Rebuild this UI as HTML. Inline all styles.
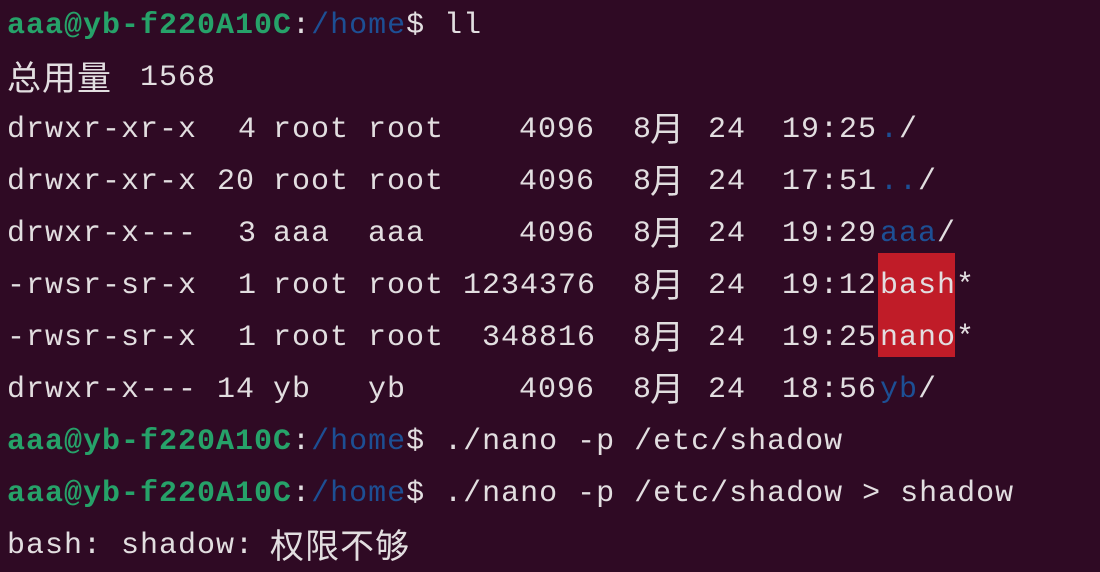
<!DOCTYPE html>
<html><head><meta charset="utf-8"><style>
html,body{margin:0;padding:0;}
body{width:1100px;height:570px;background:#2f0a24;overflow:hidden;position:relative;font-family:"Liberation Mono","Noto Sans CJK SC",monospace;font-size:30px;color:#e2dee0;letter-spacing:1px;}
.t{position:absolute;white-space:pre;line-height:52px;height:52px;}
.g{color:#26a269;font-weight:bold;}
.b{color:#1d4f94;}
.c{font-family:"Noto Sans CJK SC",sans-serif;font-size:34px;letter-spacing:1px;}
.red{position:absolute;left:878px;top:253px;width:77px;height:104px;background:#c01c28;}
</style></head><body>
<div class="red"></div>
<div class="t" style="left:7px;top:0"><span class="g">aaa@yb-f220A10C</span>:<span class="b">/home</span>$ ll</div>
<div class="t c" style="left:7px;top:50px">总用量</div>
<div class="t" style="left:140px;top:52px">1568</div>

<div class="t" style="left:7px;top:104px">drwxr-xr-x</div>
<div class="t" style="left:238px;top:104px">4</div>
<div class="t" style="left:273px;top:104px">root</div>
<div class="t" style="left:368px;top:104px">root</div>
<div class="t" style="left:519px;top:104px">4096</div>
<div class="t" style="left:633px;top:104px">8</div><div class="t c" style="left:650px;top:101px">月</div>
<div class="t" style="left:708px;top:104px">24</div>
<div class="t" style="left:782px;top:104px">19:25</div>
<div class="t" style="left:880px;top:104px"><span class="b">.</span>/</div>

<div class="t" style="left:7px;top:156px">drwxr-xr-x</div>
<div class="t" style="left:217px;top:156px">20</div>
<div class="t" style="left:273px;top:156px">root</div>
<div class="t" style="left:368px;top:156px">root</div>
<div class="t" style="left:519px;top:156px">4096</div>
<div class="t" style="left:633px;top:156px">8</div><div class="t c" style="left:650px;top:153px">月</div>
<div class="t" style="left:708px;top:156px">24</div>
<div class="t" style="left:782px;top:156px">17:51</div>
<div class="t" style="left:880px;top:156px"><span class="b">..</span>/</div>

<div class="t" style="left:7px;top:208px">drwxr-x---</div>
<div class="t" style="left:238px;top:208px">3</div>
<div class="t" style="left:273px;top:208px">aaa</div>
<div class="t" style="left:368px;top:208px">aaa</div>
<div class="t" style="left:519px;top:208px">4096</div>
<div class="t" style="left:633px;top:208px">8</div><div class="t c" style="left:650px;top:205px">月</div>
<div class="t" style="left:708px;top:208px">24</div>
<div class="t" style="left:782px;top:208px">19:29</div>
<div class="t" style="left:880px;top:208px"><span class="b">aaa</span>/</div>

<div class="t" style="left:7px;top:260px">-rwsr-sr-x</div>
<div class="t" style="left:238px;top:260px">1</div>
<div class="t" style="left:273px;top:260px">root</div>
<div class="t" style="left:368px;top:260px">root</div>
<div class="t" style="left:463px;top:260px">1234376</div>
<div class="t" style="left:633px;top:260px">8</div><div class="t c" style="left:650px;top:257px">月</div>
<div class="t" style="left:708px;top:260px">24</div>
<div class="t" style="left:782px;top:260px">19:12</div>
<div class="t" style="left:880px;top:260px">bash*</div>

<div class="t" style="left:7px;top:312px">-rwsr-sr-x</div>
<div class="t" style="left:238px;top:312px">1</div>
<div class="t" style="left:273px;top:312px">root</div>
<div class="t" style="left:368px;top:312px">root</div>
<div class="t" style="left:482px;top:312px">348816</div>
<div class="t" style="left:633px;top:312px">8</div><div class="t c" style="left:650px;top:309px">月</div>
<div class="t" style="left:708px;top:312px">24</div>
<div class="t" style="left:782px;top:312px">19:25</div>
<div class="t" style="left:880px;top:312px">nano*</div>

<div class="t" style="left:7px;top:364px">drwxr-x---</div>
<div class="t" style="left:217px;top:364px">14</div>
<div class="t" style="left:273px;top:364px">yb</div>
<div class="t" style="left:368px;top:364px">yb</div>
<div class="t" style="left:519px;top:364px">4096</div>
<div class="t" style="left:633px;top:364px">8</div><div class="t c" style="left:650px;top:361px">月</div>
<div class="t" style="left:708px;top:364px">24</div>
<div class="t" style="left:782px;top:364px">18:56</div>
<div class="t" style="left:880px;top:364px"><span class="b">yb</span>/</div>

<div class="t" style="left:7px;top:416px"><span class="g">aaa@yb-f220A10C</span>:<span class="b">/home</span>$ ./nano -p /etc/shadow</div>
<div class="t" style="left:7px;top:468px"><span class="g">aaa@yb-f220A10C</span>:<span class="b">/home</span>$ ./nano -p /etc/shadow &gt; shadow</div>
<div class="t" style="left:7px;top:520px">bash: shadow:</div>
<div class="t c" style="left:270px;top:518px">权限不够</div>
</body></html>
